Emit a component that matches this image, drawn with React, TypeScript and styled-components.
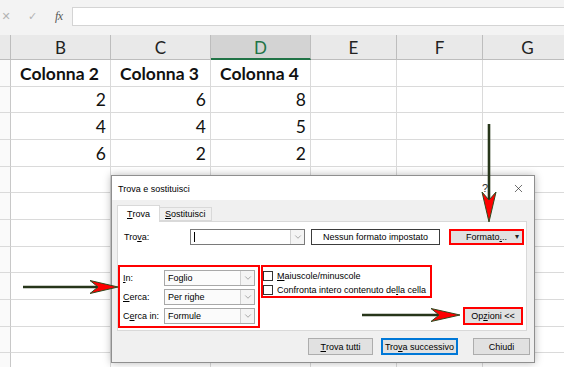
import React from 'react';
import styled, { createGlobalStyle } from 'styled-components';
import { ChevronDown, X } from 'lucide-react';

const GlobalStyle = createGlobalStyle`
  html, body { margin: 0; padding: 0; }
  body {
    width: 564px;
    height: 367px;
    overflow: hidden;
    background: #fff;
    font-family: "Liberation Sans", Arial, sans-serif;
  }
`;

const columns = [
  { label: 'B', width: 100 },
  { label: 'C', width: 100 },
  { label: 'D', width: 100, selected: true },
  { label: 'E', width: 86 },
  { label: 'F', width: 86 },
  { label: 'G', width: 90 },
];

const rowHeights = [27, 26, 27, 27, 26, 27, 27, 26, 27, 27, 26, 27];

const data: (string | number)[][] = [
  ['Colonna 2', 'Colonna 3', 'Colonna 4'],
  [2, 6, 8],
  [4, 4, 5],
  [6, 2, 2],
];

export default function App(): JSX.Element {
  return (
    <Screen>
      <GlobalStyle />
      <TopBar>
        <BarIcons>
          <BarIcon>✕</BarIcon>
          <BarIcon>✓</BarIcon>
          <FxIcon>fx</FxIcon>
        </BarIcons>
        <FormulaBox />
      </TopBar>

      <Grid $cols={columns.map((c) => c.width)}>
        <CornerCell />
        {columns.map((c) => (
          <HeadCell key={c.label} $sel={c.selected}>{c.label}</HeadCell>
        ))}
        {rowHeights.map((h, r) => (
          <React.Fragment key={r}>
            <RowHead $h={h} />
            {columns.map((c, ci) => {
              const v = data[r]?.[ci];
              const isText = typeof v === 'string';
              return (
                <Cell key={c.label} $h={h} $bold={isText} $align={isText ? 'center' : 'flex-end'}>
                  {v}
                </Cell>
              );
            })}
          </React.Fragment>
        ))}
      </Grid>

      <Dialog>
        <TitleBar>
          <TitleText>Trova e sostituisci</TitleText>
          <TitleButtons>
            <HelpMark>?</HelpMark>
            <X size={13} strokeWidth={1.2} color="#222" />
          </TitleButtons>
        </TitleBar>
        <DialogBody>
          <TabStrip>
            <Tab $active><u>T</u>rova</Tab>
            <Tab><u>S</u>ostituisci</Tab>
          </TabStrip>
          <Panel>
            <FindRow>
              <FindLabel>Tro<u>v</u>a:</FindLabel>
              <Combo $width={115} $editable>
                <ComboText><Caret /></ComboText>
                <ComboArrow><ChevronDown size={10} strokeWidth={1.3} color="#666" /></ComboArrow>
              </Combo>
              <FormatInfo>Nessun formato impostato</FormatInfo>
              <MarkedButton $width={75} $height={16}>
                Formato<u>.</u>..
                <DropMark>▾</DropMark>
              </MarkedButton>
            </FindRow>

            <OptionsArea>
              <SelectGroup>
                <SelectLabel><u>I</u>n:</SelectLabel>
                <Combo $width={91}>
                  <ComboText>Foglio</ComboText>
                  <ComboArrow><ChevronDown size={10} strokeWidth={1.3} color="#666" /></ComboArrow>
                </Combo>
                <SelectLabel><u>C</u>erca:</SelectLabel>
                <Combo $width={91}>
                  <ComboText>Per righe</ComboText>
                  <ComboArrow><ChevronDown size={10} strokeWidth={1.3} color="#666" /></ComboArrow>
                </Combo>
                <SelectLabel>C<u>e</u>rca in:</SelectLabel>
                <Combo $width={91}>
                  <ComboText>Formule</ComboText>
                  <ComboArrow><ChevronDown size={10} strokeWidth={1.3} color="#666" /></ComboArrow>
                </Combo>
              </SelectGroup>

              <RightColumn>
                <CheckGroup>
                  <CheckRow><CheckBox /><span><u>M</u>aiuscole/minuscole</span></CheckRow>
                  <CheckRow><CheckBox /><span>Confronta intero contenuto de<u>l</u>la cella</span></CheckRow>
                </CheckGroup>
                <OptionsButtonRow>
                  <MarkedButton $width={60} $height={18}>Op<u>z</u>ioni &lt;&lt;</MarkedButton>
                </OptionsButtonRow>
              </RightColumn>
            </OptionsArea>
          </Panel>

          <ButtonRow>
            <DialogButton $width={65}><u>T</u>rova tutti</DialogButton>
            <DialogButton $width={77} $default>Tro<u>v</u>a successivo</DialogButton>
            <DialogButton $width={57} $gap={15}>Chiudi</DialogButton>
          </ButtonRow>
        </DialogBody>
      </Dialog>

      <Arrows width="564" height="367" viewBox="0 0 564 367">
        <line x1="489" y1="124" x2="489" y2="202" stroke="#27361a" strokeWidth="2.6" />
        <path d="M489 222 L482 192 L489 200 L496 192 Z" fill="#ff0000" stroke="#2f4a1f" strokeWidth="1" />

        <line x1="23" y1="287" x2="100" y2="287" stroke="#27361a" strokeWidth="2.6" />
        <path d="M118 287 L90 280.5 L98 287 L90 293.5 Z" fill="#ff0000" stroke="#2f4a1f" strokeWidth="1" />

        <line x1="362" y1="315" x2="442" y2="315" stroke="#27361a" strokeWidth="2.6" />
        <path d="M460 315 L431 308.5 L439 315 L431 321.5 Z" fill="#ff0000" stroke="#2f4a1f" strokeWidth="1" />
      </Arrows>
    </Screen>
  );
}

const Screen = styled.div`
  position: relative;
  width: 564px;
  height: 367px;
  overflow: hidden;
  background: #fff;
`;

const TopBar = styled.div`
  height: 35px;
  box-sizing: border-box;
  padding-top: 7px;
  background: #f3f3f3;
  display: flex;
  align-items: flex-start;
`;

const BarIcons = styled.div`
  width: 79px;
  height: 19px;
  display: flex;
  align-items: center;
  margin-left: -7px;
`;

const BarIcon = styled.span`
  width: 28px;
  text-align: center;
  font-family: "DejaVu Sans", sans-serif;
  font-size: 11px;
  color: #b3b3b3;
`;

const FxIcon = styled.span`
  width: 28px;
  text-align: center;
  font-family: "Liberation Serif", serif;
  font-style: italic;
  font-size: 12px;
  color: #555;
  letter-spacing: -0.5px;
`;

const FormulaBox = styled.div`
  flex: 1;
  height: 19px;
  box-sizing: border-box;
  background: #fff;
  border: 1px solid #d4d4d4;
  border-right: none;
`;

const Grid = styled.div<{ $cols: number[] }>`
  display: grid;
  grid-template-columns: 11px ${(p) => p.$cols.map((w) => `${w}px`).join(' ')};
  font-family: Lato, "Open Sans", sans-serif;
`;

const CornerCell = styled.div`
  height: 25px;
  box-sizing: border-box;
  background: #e9e9e9;
  border-right: 1px solid #bdbdbd;
  border-bottom: 1px solid #bdbdbd;
`;

const HeadCell = styled.div<{ $sel?: boolean }>`
  height: 25px;
  box-sizing: border-box;
  background: ${(p) => (p.$sel ? '#d3d3d3' : '#e9e9e9')};
  color: ${(p) => (p.$sel ? '#217346' : '#222')};
  border-right: 1px solid #bdbdbd;
  border-bottom: ${(p) => (p.$sel ? '2px solid #217346' : '1px solid #bdbdbd')};
  display: flex;
  align-items: center;
  justify-content: center;
  font-size: 17px;
  padding-top: 1px;
`;

const RowHead = styled.div<{ $h: number }>`
  height: ${(p) => p.$h}px;
  box-sizing: border-box;
  background: #fafafa;
  border-right: 1px solid #c8c8c8;
  border-bottom: 1px solid #dadada;
`;

const Cell = styled.div<{ $h: number; $bold?: boolean; $align: string }>`
  height: ${(p) => p.$h}px;
  box-sizing: border-box;
  border-right: 1px solid #dadada;
  border-bottom: 1px solid #dadada;
  display: flex;
  align-items: flex-end;
  justify-content: ${(p) => p.$align};
  padding: 0 4px 2px 2px;
  font-size: 17.5px;
  font-weight: ${(p) => (p.$bold ? 700 : 400)};
  line-height: 21px;
  color: #111;
`;

const Dialog = styled.div`
  position: absolute;
  left: 111px;
  top: 175px;
  width: 424px;
  height: 188px;
  box-sizing: border-box;
  border: 1px solid #8f8f8f;
  background: #f0f0f0;
  box-shadow: 0 0 8px rgba(0, 0, 0, 0.28);
  display: flex;
  flex-direction: column;
  font-size: 9px;
  color: #000;
`;

const TitleBar = styled.div`
  height: 24px;
  background: #fff;
  display: flex;
  align-items: center;
  justify-content: space-between;
  padding: 0 9px 0 6px;
`;

const TitleText = styled.span`
  font-size: 9px;
  padding-top: 1px;
`;

const TitleButtons = styled.div`
  display: flex;
  align-items: center;
  gap: 24px;
`;

const HelpMark = styled.span`
  font-size: 11px;
  color: #333;
`;

const DialogBody = styled.div`
  flex: 1;
  padding: 5px 7px 0 5px;
  display: flex;
  flex-direction: column;
`;

const TabStrip = styled.div`
  height: 16px;
  display: flex;
  align-items: flex-end;
  position: relative;
  z-index: 1;
`;

const Tab = styled.div<{ $active?: boolean }>`
  box-sizing: border-box;
  height: ${(p) => (p.$active ? 17 : 14)}px;
  margin-bottom: ${(p) => (p.$active ? -1 : 0)}px;
  padding: 0 ${(p) => (p.$active ? 9 : 5)}px;
  display: flex;
  align-items: center;
  background: ${(p) => (p.$active ? '#fff' : '#f0f0f0')};
  border: 1px solid #d9d9d9;
  border-bottom: ${(p) => (p.$active ? 'none' : '1px solid #d9d9d9')};
  margin-right: -1px;
  font-size: 9px;
  min-width: ${(p) => (p.$active ? 43 : 52)}px;
`;

const Panel = styled.div`
  height: 110px;
  box-sizing: border-box;
  background: #fff;
  border: 1px solid #d9d9d9;
  padding-top: 7px;
  display: flex;
  flex-direction: column;
`;

const FindRow = styled.div`
  height: 16px;
  display: flex;
  align-items: center;
`;

const FindLabel = styled.span`
  width: 66px;
  margin-left: 6px;
`;

const Combo = styled.div<{ $width: number; $editable?: boolean }>`
  width: ${(p) => p.$width}px;
  height: 16px;
  box-sizing: border-box;
  border: 1px solid ${(p) => (p.$editable ? '#7a7a7a' : '#a8a8a8')};
  background: ${(p) => (p.$editable ? '#fff' : '#fbfbfb')};
  display: flex;
  align-items: stretch;
`;

const ComboText = styled.span`
  flex: 1;
  display: flex;
  align-items: center;
  padding-left: 3px;
`;

const Caret = styled.span`
  width: 1px;
  height: 10px;
  background: #000;
`;

const ComboArrow = styled.span`
  width: 13px;
  border-left: 1px solid #d0d0d0;
  display: flex;
  align-items: center;
  justify-content: center;
  background: #f4f4f4;
`;

const FormatInfo = styled.div`
  width: 129px;
  height: 16px;
  margin-left: 6px;
  box-sizing: border-box;
  border: 1px solid #3c3c3c;
  background: #fff;
  display: flex;
  align-items: center;
  justify-content: center;
`;

const MarkedButton = styled.div<{ $width: number; $height: number }>`
  width: ${(p) => p.$width}px;
  height: ${(p) => p.$height}px;
  margin-left: 9px;
  box-sizing: border-box;
  border: 2px solid #ff0000;
  background: #e1e1e1;
  display: flex;
  align-items: center;
  justify-content: center;
  position: relative;
`;

const DropMark = styled.span`
  position: absolute;
  right: 3px;
  top: 1px;
  font-size: 8px;
  color: #222;
`;

const OptionsArea = styled.div`
  margin-top: 20px;
  display: flex;
  align-items: flex-start;
`;

const SelectGroup = styled.div`
  width: 142px;
  height: 63px;
  box-sizing: border-box;
  border: 2px solid #ff0000;
  padding: 3px 3px 0 3px;
  display: grid;
  grid-template-columns: 41px 91px;
  grid-auto-rows: 16px;
  row-gap: 3px;
  align-items: center;
`;

const SelectLabel = styled.span`
  padding-left: 0;
`;

const RightColumn = styled.div`
  flex: 1;
  margin-left: 1px;
  display: flex;
  flex-direction: column;
`;

const CheckGroup = styled.div`
  width: 171px;
  height: 33px;
  box-sizing: border-box;
  border: 2px solid #ff0000;
  padding-top: 3px;
  display: flex;
  flex-direction: column;
  gap: 3px;
`;

const CheckRow = styled.div`
  height: 11px;
  display: flex;
  align-items: center;
  gap: 4px;
`;

const CheckBox = styled.span`
  width: 10px;
  height: 10px;
  box-sizing: border-box;
  border: 1px solid #333;
  background: #fff;
`;

const OptionsButtonRow = styled.div`
  margin-top: 9px;
  padding-right: 3px;
  display: flex;
  justify-content: flex-end;
`;

const ButtonRow = styled.div`
  margin-top: 7px;
  margin-right: -3px;
  display: flex;
  justify-content: flex-end;
`;

const DialogButton = styled.div<{ $width: number; $default?: boolean; $gap?: number }>`
  width: ${(p) => p.$width}px;
  height: 17px;
  margin-left: ${(p) => p.$gap ?? 8}px;
  box-sizing: border-box;
  border: ${(p) => (p.$default ? '2px solid #0078d7' : '1px solid #adadad')};
  background: #e1e1e1;
  display: flex;
  align-items: center;
  justify-content: center;
`;

const Arrows = styled.svg`
  position: absolute;
  left: 0;
  top: 0;
  pointer-events: none;
`;
